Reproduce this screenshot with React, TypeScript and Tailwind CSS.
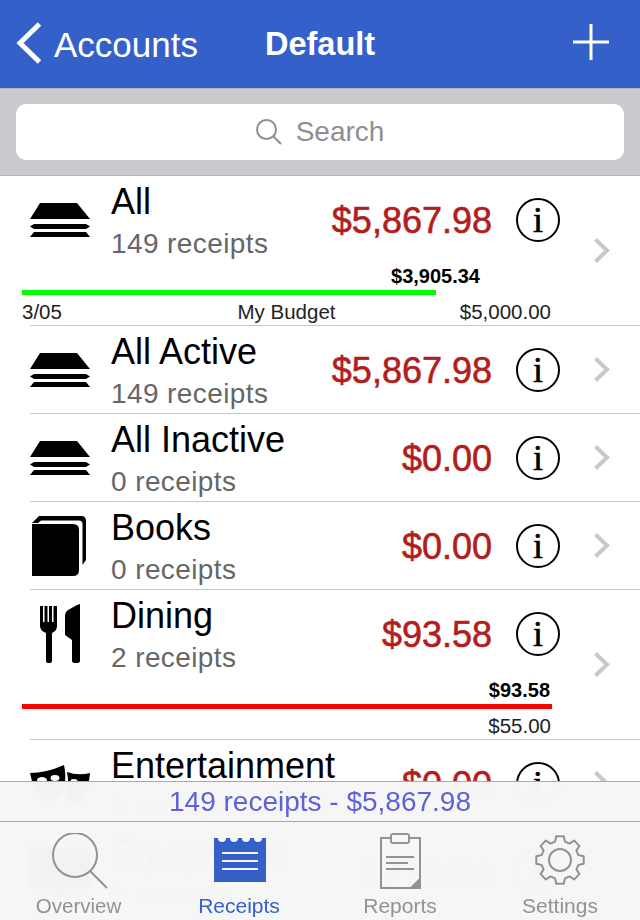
import React from 'react';

const StackIcon = () => (
  <svg width="60" height="60" viewBox="0 0 60 60" fill="#000">
    <path d="M10 13H47L60 29H0Z" />
    <path d="M4 34H56L60 36.5L56 39H4L0 36.5Z" />
    <path d="M4 42H56L60 47H0Z" />
  </svg>
);

const BookIcon = () => (
  <svg width="60" height="60" viewBox="0 0 60 60" fill="#000">
    <path d="M2 7L9 0H51Q56 0 56 5V44L52.5 49V8Q52.5 4.5 49 4.5H11L8 7H2Z" />
    <path d="M2 8H43Q49 8 49 14V54Q49 60 43 60H2Z" />
  </svg>
);

const DiningIcon = () => (
  <svg width="60" height="60" viewBox="0 0 60 60" fill="#000">
    <path d="M10 2H13V18H14.5V2H17.5V18H19V2H22V18H23.5V2H27V22Q27 27 22 29V57Q22 59 19 59Q16 59 16 57V29Q10 27 10 22Z" />
    <path d="M50 0V57Q50 59 46 59Q42 59 42 57V36L35 31V11Q35 8 38 6L47 1Z" />
  </svg>
);

const MasksIcon = () => (
  <svg width="60" height="60" viewBox="0 0 60 60" fill="#000">
    <path d="M0 19Q16 19 34 11Q38 30 30 41Q24 49 16 47Q5 43 0 19Z" />
    <path d="M37 18Q48 22 60 19Q58 42 46 50Q40 50 35 45Q40 32 37 18Z" />
    <ellipse cx="12" cy="26" rx="5" ry="3" fill="#fff" />
    <ellipse cx="25" cy="24" rx="4.5" ry="3" fill="#fff" />
    <ellipse cx="44" cy="27" rx="3.5" ry="2" fill="#fff" />
  </svg>
);

const MonitorIcon = () => (
  <svg width="60" height="60" viewBox="0 0 60 60" fill="#000">
    <path d="M0 5H60V45H36V51H44V54H16V51H24V45H0Z" />
  </svg>
);

const Chevron = () => (
  <svg width="16" height="25" viewBox="0 0 16 25" fill="none" stroke="#c7c7cc" strokeWidth="4">
    <path d="M1.5 1.5L13 12.5L1.5 23.5" />
  </svg>
);

type Budget = { spent: string; limit: string; ratio: number; date?: string; name?: string; spentPad: string; color: string };

type Account = { name: string; count: string; amount: string; icon: React.ReactNode; budget?: Budget };

const accounts: Account[] = [
  {
    name: 'All', count: '149 receipts', amount: '$5,867.98', icon: <StackIcon />,
    budget: { spent: '$3,905.34', limit: '$5,000.00', ratio: 3905.34 / 5000, date: '3/05', name: 'My Budget', spentPad: 'pr-[72px]', color: 'bg-[#00ff00]' },
  },
  { name: 'All Active', count: '149 receipts', amount: '$5,867.98', icon: <StackIcon /> },
  { name: 'All Inactive', count: '0 receipts', amount: '$0.00', icon: <StackIcon /> },
  { name: 'Books', count: '0 receipts', amount: '$0.00', icon: <BookIcon /> },
  {
    name: 'Dining', count: '2 receipts', amount: '$93.58', icon: <DiningIcon />,
    budget: { spent: '$93.58', limit: '$55.00', ratio: 1, spentPad: 'pr-[2px]', color: 'bg-[#ff0000]' },
  },
  { name: 'Entertainment', count: '0 receipts', amount: '$0.00', icon: <MasksIcon /> },
  { name: 'Equipment', count: '3 receipts', amount: '$779.94', icon: <MonitorIcon /> },
];

function AccountRow({ account }: { account: Account }) {
  const { budget } = account;
  return (
    <div>
      <div className="flex">
        <div className="w-[590px]">
          <div className="flex h-[87px] items-center pl-[30px] pr-[30px] pt-px">
            <div className="w-[60px] shrink-0">{account.icon}</div>
            <div className="ml-[21px] flex-1 self-start pt-[5px]">
              <div className="h-[40px] text-[36px] leading-[40px] text-black whitespace-nowrap">{account.name}</div>
              <div className="h-[41px] text-[28px] leading-[44px] tracking-[0.4px] text-[#666]">{account.count}</div>
            </div>
            <div className="mt-[1px] text-[36px] leading-[44px] text-[#b21d20] [-webkit-text-stroke:0.6px_#b21d20]">{account.amount}</div>
            <div className="ml-[24px] flex h-[44px] w-[44px] shrink-0 items-center justify-center rounded-full border-2 border-black font-['Liberation_Serif',serif] text-[36px] leading-none text-black [-webkit-text-stroke:0.6px_#000]">
              i
            </div>
          </div>
          {budget && (
            <div className="ml-[22px] h-[62px] w-[530px] pt-px text-[#222]">
              <div className={`h-[24px] text-right text-[20px] font-bold leading-[24px] text-black ${budget.spentPad}`}>{budget.spent}</div>
              <div className="mt-[2px] h-[5px]">
                <div className={`h-[5px] ${budget.color}`} style={{ width: `${budget.ratio * 100}%` }} />
              </div>
              <div className="mt-[4px] grid h-[26px] grid-cols-3 pr-px text-[20.5px] leading-[26px]">
                <div>{budget.date}</div>
                <div className="text-center whitespace-nowrap">{budget.name}</div>
                <div className="text-right">{budget.limit}</div>
              </div>
            </div>
          )}
        </div>
        <div className="flex flex-1 items-center pl-[4px]">
          <Chevron />
        </div>
      </div>
      <div className="ml-[30px] h-px bg-[#c8c7cc]" />
    </div>
  );
}

const gearPath = () => {
  const teeth = 8;
  const pt = (r: number, deg: number) => {
    const a = ((deg - 90) * Math.PI) / 180;
    return `${(25 + r * Math.cos(a)).toFixed(2)} ${(25 + r * Math.sin(a)).toFixed(2)}`;
  };
  let d = '';
  for (let i = 0; i < teeth; i++) {
    const c = i * (360 / teeth);
    d += `${i === 0 ? 'M' : 'L'}${pt(19, c - 15)}L${pt(24, c - 9)}L${pt(24, c + 9)}L${pt(19, c + 15)}`;
  }
  return d + 'Z';
};

const tabs = [
  {
    label: 'Overview',
    labelClass: 'mr-[3px] text-[20.5px] text-[#929292]',
    icon: (
      <svg width="80" height="60" viewBox="0 2 80 60" fill="none" stroke="#929292" strokeWidth="2">
        <circle cx="35" cy="24" r="22" />
        <path d="M50 40L67 57" />
      </svg>
    ),
  },
  {
    label: 'Receipts',
    labelClass: 'mr-[2px] text-[21px] text-[#3461c9]',
    icon: (
      <svg width="80" height="60" viewBox="0 2 80 60">
        <rect x="14" y="7" width="52" height="44" fill="#3461c9" />
        {[22, 34, 46, 58].map(x => (
          <circle key={x} cx={x} cy="7" r="4" fill="#f6f6f7" />
        ))}
        <path d="M22 22H58M22 30H58M22 38H58" stroke="#f6f6f7" strokeWidth="2" />
      </svg>
    ),
  },
  {
    label: 'Reports',
    labelClass: 'text-[21px] text-[#929292]',
    icon: (
      <svg width="80" height="60" viewBox="0 2 80 60" fill="none" stroke="#929292" strokeWidth="2">
        <path d="M31 7H21V57H51L60 48V7H49" />
        <path d="M60 48V57H51" />
        <path d="M52 56L59 49V56Z" fill="#929292" stroke="none" />
        <rect x="31" y="3" width="18" height="9" rx="2" />
        <path d="M40 1V3" />
        <path d="M26 26H54M26 32H48M26 38H54" />
      </svg>
    ),
  },
  {
    label: 'Settings',
    labelClass: 'text-[21px] text-[#929292]',
    icon: (
      <svg width="80" height="60" viewBox="-15 -2 80 60" fill="none" stroke="#929292" strokeWidth="2" strokeLinejoin="round">
        <path d={gearPath()} />
        <circle cx="25" cy="25" r="11" />
      </svg>
    ),
  },
];

export default function App() {
  return (
    <div className="relative h-[920px] w-[640px] overflow-hidden bg-white font-['Liberation_Sans',sans-serif]">
      {/* nav */}
      <div className="flex h-[88px] items-center bg-[#3461c9] text-white">
        <svg width="26" height="42" viewBox="0 0 26 42" fill="none" stroke="#fff" strokeWidth="5" className="ml-[16px] -mt-[3px]">
          <path d="M23.5 2L4 21L23.5 40" />
        </svg>
        <span className="ml-[12px] text-[35px] leading-none">Accounts</span>
        <span className="ml-[67px] text-[32.5px] font-bold leading-none">Default</span>
        <svg width="36" height="36" viewBox="0 0 36 36" fill="none" stroke="#fff" strokeWidth="3" className="ml-auto mr-[31px] -mt-[5px]">
          <path d="M0 18H36M18 0V36" />
        </svg>
      </div>

      {/* search */}
      <div className="h-[88px] border-y border-y-[#b5b5b8] bg-[#c9c9ce] px-[16px] pt-[15px]">
        <div className="flex h-[56px] items-center justify-center rounded-[10px] bg-white text-[28px] text-[#8e8e93]">
          <svg width="26" height="26" viewBox="0 0 26 26" fill="none" stroke="#8e8e93" strokeWidth="2" className="mr-[14px]">
            <circle cx="10.5" cy="10.5" r="9.5" />
            <path d="M17 17L25 25" />
          </svg>
          Search
        </div>
      </div>

      {accounts.map(a => (
        <AccountRow key={a.name} account={a} />
      ))}

      {/* translucent bottom bars */}
      <div className="absolute inset-x-0 bottom-0 h-[139px] backdrop-blur-[2px]">
        <div className="flex h-[40px] items-center justify-center border-t border-t-[#a9a9a9] bg-[#f6f6f7]/[0.985] text-[28px] text-[#5e62d6]">
          149 receipts - $5,867.98
        </div>
        <div className="grid h-[99px] grid-cols-4 border-t border-t-[#a9a9a9] bg-[#f6f6f7]/[0.985]">
          {tabs.map(t => (
            <div key={t.label} className="flex flex-col items-center pt-[11px]">
              {t.icon}
              <span className={`mt-px leading-[24px] ${t.labelClass}`}>{t.label}</span>
            </div>
          ))}
        </div>
      </div>
    </div>
  );
}
